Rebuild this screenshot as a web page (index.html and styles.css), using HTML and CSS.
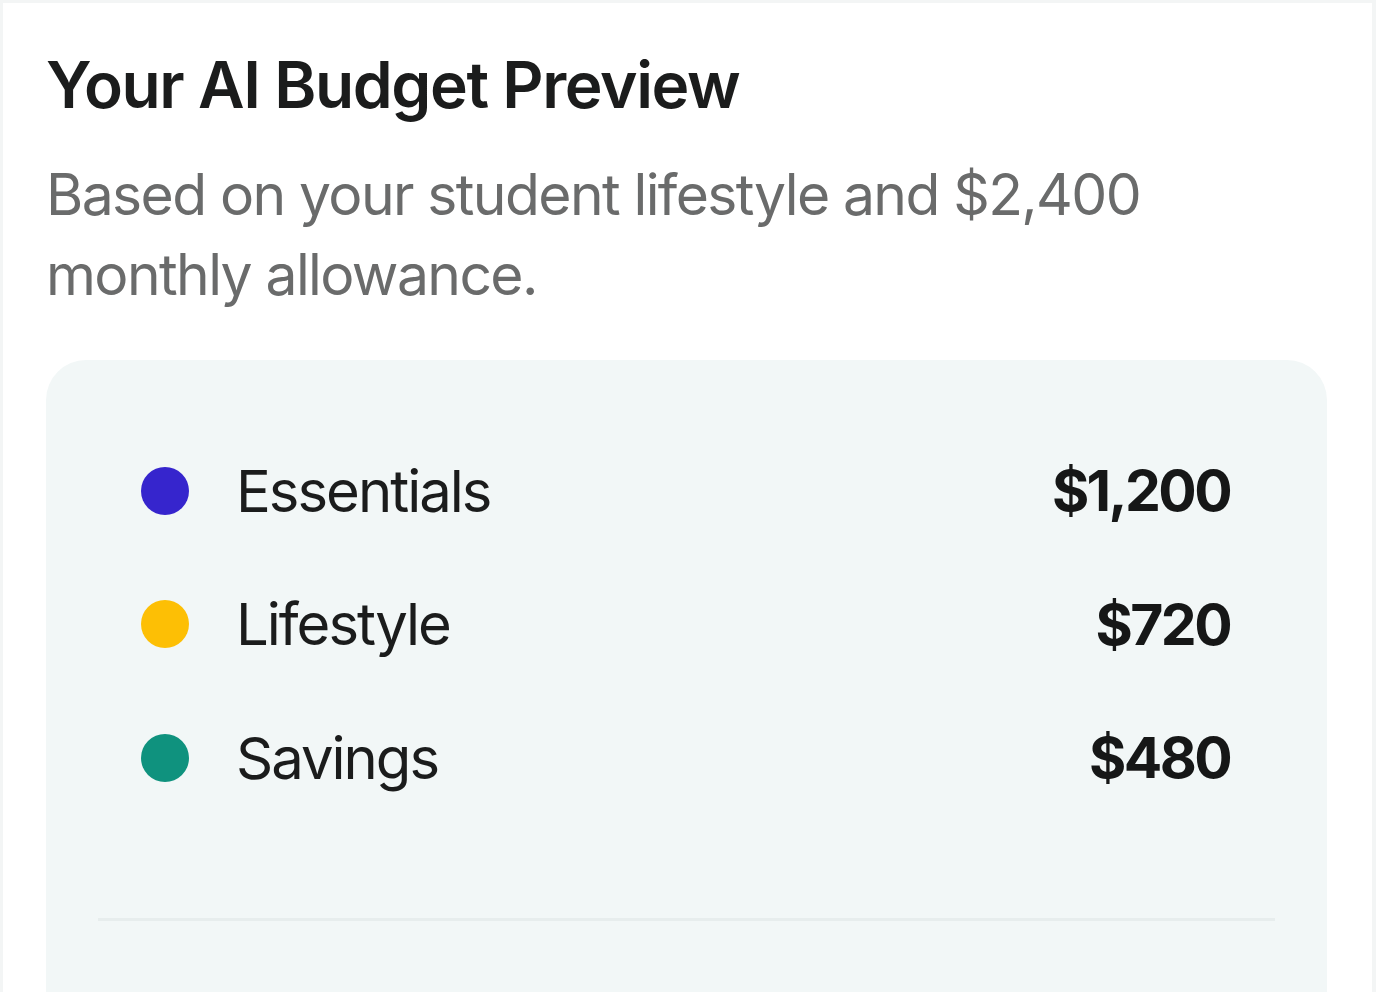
FILE: index.html
```html
<!DOCTYPE html>
<html lang="en">
<head>
<meta charset="utf-8">
<title>Your AI Budget Preview</title>
<link rel="stylesheet" href="styles.css">
</head>
<body>
<main class="frame">
  <h1 class="title">Your AI Budget Preview</h1>
  <p class="subtitle">Based on your student lifestyle and $2,400 monthly allowance.</p>
  <section class="card">
    <ul class="rows">
      <li class="row">
        <span class="dot dot-blue"></span>
        <span class="label">Essentials</span>
        <span class="amount">$1,200</span>
      </li>
      <li class="row">
        <span class="dot dot-yellow"></span>
        <span class="label">Lifestyle</span>
        <span class="amount">$720</span>
      </li>
      <li class="row">
        <span class="dot dot-teal"></span>
        <span class="label">Savings</span>
        <span class="amount">$480</span>
      </li>
    </ul>
    <div class="divider"></div>
  </section>
</main>
</body>
</html>
```

FILE: styles.css
```css
* { box-sizing: border-box; }
html, body {
  margin: 0;
  padding: 0;
  background: #ffffff;
}
body {
  font-family: Inter, "Noto Sans", "Liberation Sans", sans-serif;
  color: #1b1c1c;
}
.frame {
  height: 992px;
  overflow: hidden;
  border: 3px solid #f3f5f5;
  border-right-width: 4px;
  border-bottom: none;
  padding: 43px 45px 0 43px;
}
.title {
  margin: 0;
  font-size: 64px;
  line-height: 77px;
  font-weight: 600;
  letter-spacing: -1.4px;
  color: #1b1c1c;
}
.subtitle {
  margin: 32px 0 0 0;
  font-size: 57px;
  line-height: 80px;
  font-weight: 400;
  letter-spacing: -1.6px;
  color: #6a6b6b;
  max-width: 1130px;
}
.card {
  margin-top: 45px;
  background: #f2f7f7;
  border-radius: 40px 40px 0 0;
  padding: 64px 52px 80px;
  min-height: 700px;
}
.rows {
  list-style: none;
  margin: 0;
  padding: 0 45px 0 43px;
}
.row {
  display: flex;
  align-items: center;
  height: 133.5px;
}
.dot {
  width: 48px;
  height: 48px;
  border-radius: 50%;
  flex: none;
}
.dot-blue { background: #3625cd; }
.dot-yellow { background: #fdbf05; }
.dot-teal { background: #0f927e; }
.label {
  margin-left: 47px;
  font-size: 58px;
  font-weight: 400;
  letter-spacing: -2px;
  color: #1b1c1c;
  flex: 1;
}
.amount {
  font-size: 57px;
  font-weight: 650;
  color: #161717;
  letter-spacing: -2.6px;
}
.divider {
  margin-top: 93px;
  height: 3px;
  background: #e7eded;
}
```
